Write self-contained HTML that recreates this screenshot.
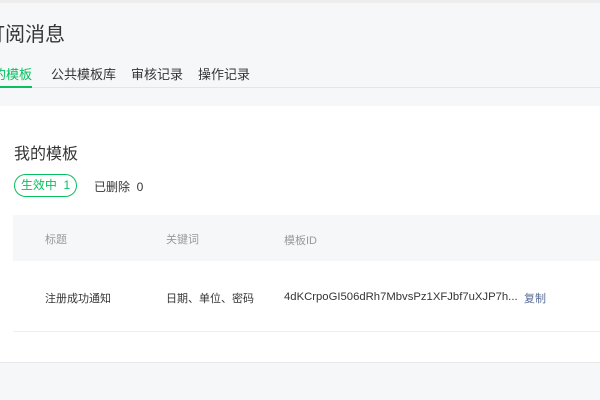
<!DOCTYPE html>
<html><head><meta charset="utf-8"><style>
*{margin:0;padding:0;box-sizing:border-box}
body{width:600px;height:400px;overflow:hidden;background:#f6f7f9;font-family:"Liberation Sans","Noto Sans CJK SC",sans-serif;position:relative;color:#353535}
.top{position:absolute;left:0;top:0;width:600px;height:3px;background:#ededed}
.t{position:absolute;left:-15px;top:18px;font-size:20px;color:#353535;white-space:nowrap}
.tabs{position:absolute;left:0;top:0;width:600px;height:88px;border-bottom:1px solid #e5e5e5}
.tab{position:absolute;top:64px;font-size:13px;color:#353535;white-space:nowrap}
.tab.a{color:#07c160;left:-20px;height:24px;border-bottom:2px solid #07c160}
.card{position:absolute;left:0;top:106px;width:600px;height:257px;background:#fff;border-bottom:1px solid #e8e8e8}
.h{position:absolute;left:14px;top:140px;font-size:16px;color:#353535}
.pill{position:absolute;left:14px;top:174px;width:63px;height:23px;border:1px solid #07c160;border-radius:12px;color:#07c160;font-size:12px;line-height:21px;text-align:center}
.del{position:absolute;left:94px;top:178px;font-size:12px;color:#353535}
.th{position:absolute;left:13px;top:215px;width:587px;height:46px;background:#f6f7f9}
.row{position:absolute;left:13px;top:261px;width:587px;height:71px;border-bottom:1px solid #eee}
.c{position:absolute;font-size:11px;white-space:nowrap}
.g{color:#999}
</style></head><body>
<div class="top"></div>
<div class="t">订阅消息</div>
<div class="tabs">
<div class="tab a">我的模板</div>
<div class="tab" style="left:51px">公共模板库</div>
<div class="tab" style="left:131px">审核记录</div>
<div class="tab" style="left:198px">操作记录</div>
</div>
<div class="card"></div>
<div class="h">我的模板</div>
<div class="pill">生效中&nbsp; 1</div>
<div class="del">已删除&nbsp; 0</div>
<div class="th"></div>
<div class="row"></div>
<div class="c g" style="left:45px;top:231px">标题</div>
<div class="c g" style="left:166px;top:231px">关键词</div>
<div class="c g" style="left:284px;top:232px">模板ID</div>
<div class="c" style="left:45px;top:290px">注册成功通知</div>
<div class="c" style="left:166px;top:290px">日期、单位、密码</div>
<div class="c" style="left:284px;top:291px;font-size:11.3px">4dKCrpoGI506dRh7MbvsPz1XFJbf7uXJP7h...</div>
<div class="c" style="left:524px;top:290px;color:#576b95">复制</div>
</body></html>
